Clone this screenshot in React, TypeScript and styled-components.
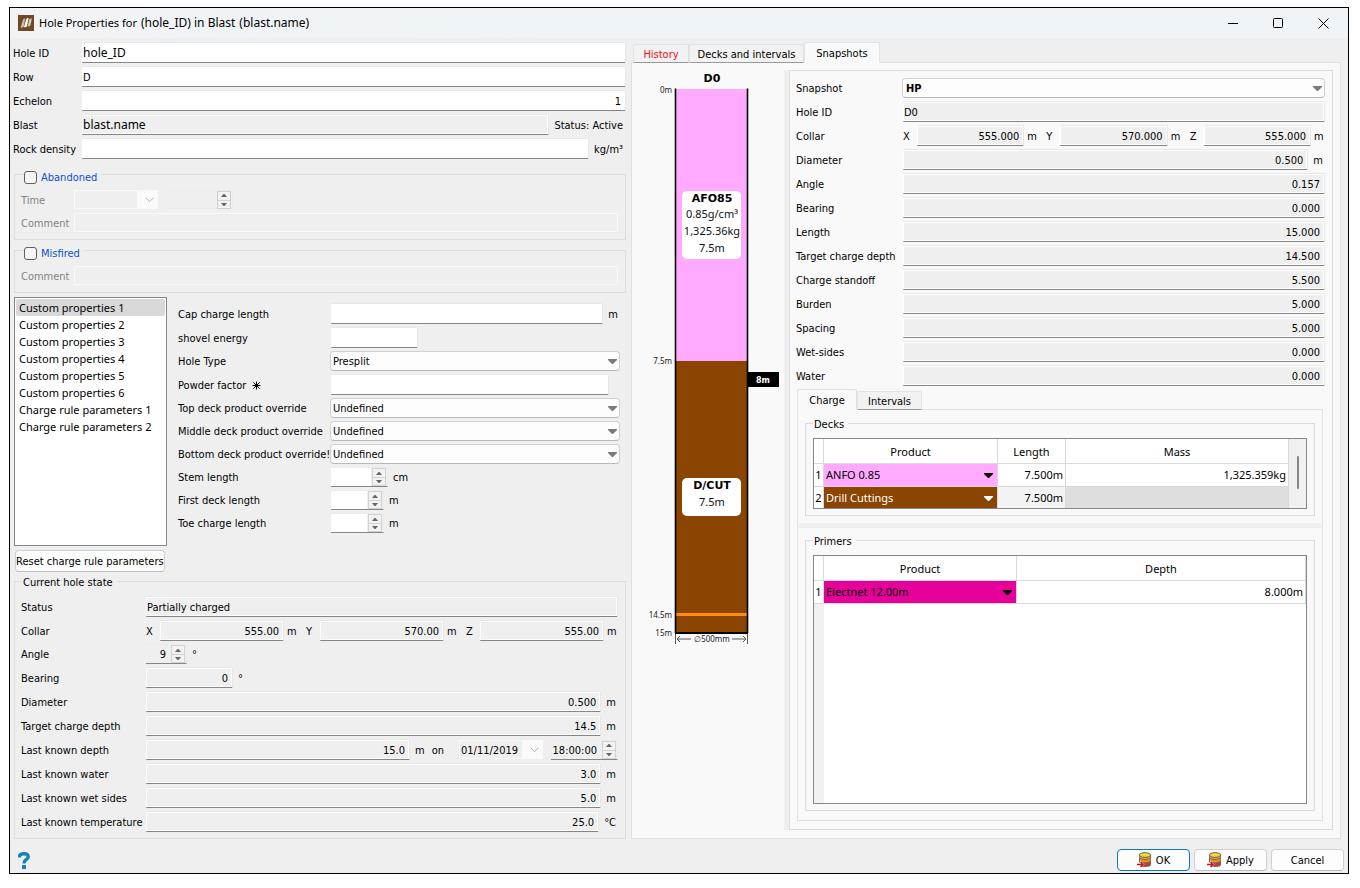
import React, { useId } from "react";
import styled, { createGlobalStyle, css } from "styled-components";

const uiFont = `"DejaVu Sans Condensed", Tahoma, sans-serif`;
const viewFont = `"Noto Sans", "Segoe UI", sans-serif`;

const GlobalStyle = createGlobalStyle`
  *, *::before, *::after { box-sizing: border-box; }
  body { margin: 0; background: #fff; color: #000; font: 11px/15px ${uiFont}; }
  button, input, select { font: inherit; color: inherit; margin: 0; padding: 0; }
  svg { display: block; }
`;

/* ---------- window frame ---------- */

const Dialog = styled.main`
  display: flex;
  flex-direction: column;
  min-width: 1220px;
  margin: 7px 11px 14px 9px;
  border: 1px solid #000;
  background: #efefef;
`;

const TitleBar = styled.header`
  display: flex;
  align-items: center;
  height: 30px;
  padding: 0 2px 0 8px;
  background: linear-gradient(90deg, #f2f3f5, #eef4f8 40%);
`;

const Title = styled.h1`
  flex: 1;
  display: flex;
  align-items: center;
  gap: 4px;
  margin: 0 0 0 5px;
  font: 400 11px/16px ${viewFont};
`;

const TitlePart = styled.span`
  font-size: 12px;
`;

const WindowButton = styled.button`
  display: grid;
  place-items: center;
  width: 45px;
  height: 30px;
  border: 0;
  background: none;
`;

const Body = styled.div`
  display: grid;
  grid-template-columns: minmax(560px, 621fr) minmax(640px, 717fr);
`;

const LeftColumn = styled.div`
  display: flex;
  flex-direction: column;
  padding: 4px 5px 0 3px;
`;

/* ---------- form parts ---------- */

const Rows = styled.div`
  display: flex;
  flex-direction: column;
  gap: 3px;
`;

const Row = styled.div<{ $label: number }>`
  display: grid;
  grid-template-columns: ${(p) => p.$label}px minmax(0, 1fr);
  align-items: center;
`;

const RowLabel = styled.label<{ $muted?: boolean }>`
  display: flex;
  align-items: center;
  gap: 6px;
  padding-top: 1px;
  white-space: nowrap;
  color: ${(p) => (p.$muted ? "#838383" : "inherit")};
`;

const Cell = styled.div<{ $gap?: number; $end?: number }>`
  display: flex;
  align-items: center;
  gap: ${(p) => p.$gap ?? 5}px;
  padding-right: ${(p) => p.$end ?? 0}px;
`;

const TextField = styled.input<{ $width?: number; $right?: boolean; $view?: boolean }>`
  ${(p) => (p.$width ? `flex: none; width: ${p.$width}px;` : "flex: 1; width: 0;")}
  min-width: 0;
  height: 21px;
  padding: 2px 4px 0 1px;
  border: 1px solid #e8e8e8;
  border-left-width: 0;
  border-bottom-color: #868686;
  border-radius: 1px;
  background: #fff;
  text-align: ${(p) => (p.$right ? "right" : "left")};
  outline: none;
  ${(p) => p.$view && `padding-top: 0; font: 12px/16px ${viewFont};`}
  &:read-only {
    background: #efefef;
    box-shadow: inset 1px 1px #fefefe, inset -1px -1px #fefefe;
  }
  &:disabled {
    height: 19px;
    border: 1px solid #f9f9f9;
    box-shadow: none;
  }
`;

const Unit = styled.span`
  padding-top: 1px;
  white-space: nowrap;
`;

const Axis = styled.label`
  flex: none;
  width: 14px;
  padding-top: 1px;
`;

const AxisUnit = styled.span<{ $last: boolean }>`
  flex: none;
  width: ${(p) => (p.$last ? 14 : 22)}px;
  padding: 1px 0 0 3px;
`;

const DepthUnits = styled.span`
  flex: none;
  display: flex;
  gap: 7px;
  width: 49px;
  padding-left: 5px;
`;

const SelectShell = styled.span`
  flex: 1;
  min-width: 0;
  display: grid;
  align-items: center;
  margin-left: -1px;
  > * { grid-area: 1 / 1; }
  > svg { justify-self: end; margin-right: 3px; pointer-events: none; }
`;

const Select = styled.select<{ $strong?: boolean }>`
  appearance: none;
  width: 100%;
  height: 20px;
  padding: 1px 16px 0 2px;
  border: 1px solid #d0d0d0;
  border-bottom-color: #b8b8b8;
  border-radius: 4px;
  background: #fdfdfd;
  outline: none;
  ${(p) => p.$strong && `font-weight: 700; padding-left: 3px;`}
`;

const SpinShell = styled.span<{ $width: number; $tone: "edit" | "read" | "off" }>`
  flex: none;
  display: flex;
  align-items: center;
  width: ${(p) => p.$width}px;
  height: ${(p) => (p.$tone === "off" ? 19 : 20)}px;
  padding-right: 1px;
  border: 1px solid #ebebeb;
  border-left-width: 0;
  border-bottom-color: ${(p) => (p.$tone === "off" ? "#ebebeb" : "#868686")};
  background: ${(p) => (p.$tone === "edit" ? "linear-gradient(90deg, #fff calc(100% - 16px), #efefef 0)" : "#efefef")};
`;

const SpinInput = styled.input`
  flex: 1;
  width: 0;
  min-width: 0;
  border: 0;
  padding: 1px 5px 0 1px;
  background: none;
  text-align: right;
  outline: none;
`;

const SpinButtons = styled.span`
  flex: none;
  display: grid;
  grid-template-rows: 8px 8px;
  width: 14px;
  border: 1px solid #d2d2d2;
`;

const SpinButton = styled.button`
  display: grid;
  place-items: center;
  border: 0;
  background: #f2f2f2;
  & + & { border-top: 1px solid #d2d2d2; }
`;

const DateShell = styled.span`
  flex: none;
  display: flex;
  align-items: stretch;
  width: 84px;
  height: 19px;
  border: 1px solid #f9f9f9;
`;

const DateInput = styled(SpinInput)`
  padding: 1px 0 0 1px;
  text-align: left;
`;

const DateButton = styled.button`
  display: grid;
  place-items: center;
  width: 20px;
  padding-left: 4px;
  border: 0;
  background: #fafafa;
`;

const Group = styled.fieldset<{ $top: number; $gap?: number; $bottom: number }>`
  min-width: 0;
  margin: ${(p) => p.$gap ?? 0}px 0 0 1px;
  padding: ${(p) => p.$top}px 7px ${(p) => p.$bottom}px 6px;
  border: 1px solid #dcdcdc;
`;

const Legend = styled.legend<{ $check?: boolean }>`
  height: 15px;
  padding: 1px 4px 0 2px;
  ${(p) =>
    p.$check &&
    css`
      height: 19px;
      margin-left: 3px;
      padding: 4px 4px 0 0;
      color: #0a50d0;
      label { display: flex; align-items: center; gap: 4px; }
      span { padding-top: 1px; }
    `}
`;

const Check = styled.input`
  appearance: none;
  width: 13px;
  height: 13px;
  border: 1px solid #5f5f5f;
  border-radius: 3px;
  background: #f5f5f5;
`;

const GroupRows = styled.div`
  display: flex;
  flex-direction: column;
  gap: 4px;
`;

/* ---------- custom properties ---------- */

const Properties = styled.section`
  display: grid;
  grid-template-columns: 153px minmax(0, 1fr);
  gap: 11px;
  margin: 4px 6px 0 1px;
`;

const PropertyRows = styled(Rows)`
  padding-top: 6px;
`;

const PropertyList = styled.ul`
  height: 249px;
  margin: 0;
  padding: 1px;
  list-style: none;
  border: 1px solid #828790;
  background: #fff;
  font: 11px/17px ${viewFont};
`;

const PropertyItem = styled.li<{ $active: boolean }>`
  padding-left: 3px;
  border-radius: 2px;
  background: ${(p) => (p.$active ? "#d9d9d9" : "transparent")};
`;

const Button = styled.button<{ $primary?: boolean; $width?: number }>`
  display: flex;
  align-items: center;
  justify-content: center;
  gap: 4px;
  ${(p) => p.$width && `width: ${p.$width}px;`}
  height: 22px;
  border: 1px solid ${(p) => (p.$primary ? "#0a78c8" : "#d0d0d0")};
  ${(p) => !p.$primary && "border-bottom-color: #bcbcbc;"}
  border-radius: 4px;
  background: #fdfdfd;
  white-space: nowrap;
`;

const ResetButton = styled(Button)`
  align-self: flex-start;
  margin: 4px 0 2px 2px;
`;

/* ---------- snapshots ---------- */

const RightColumn = styled.div`
  display: flex;
  flex-direction: column;
  min-width: 0;
  padding: 4px 7px 0 0;
`;

const Tabs = styled.div<{ $inner?: boolean }>`
  display: flex;
  align-items: flex-end;
  height: 20px;
  padding-left: ${(p) => (p.$inner ? 0 : 2)}px;
  ${(p) => p.$inner && "margin-top: 3px;"}
`;

const Tab = styled.button<{ $active?: boolean; $alert?: boolean; $width: number }>`
  position: relative;
  width: ${(p) => p.$width}px;
  height: ${(p) => (p.$active ? 21 : 19)}px;
  margin-bottom: -1px;
  padding-top: ${(p) => (p.$active ? 1 : 2)}px;
  border: 1px solid #e2e2e2;
  border-bottom-color: ${(p) => (p.$active ? "#f9f9f9" : "#9a9a9a")};
  border-radius: 2px 2px 0 0;
  background: ${(p) => (p.$active ? "#f9f9f9" : "#f2f2f2")};
  color: ${(p) => (p.$alert ? "#f01020" : "inherit")};
  white-space: nowrap;
`;

const TabPanel = styled.div`
  flex: 1;
  display: grid;
  grid-template-columns: 152px 5px minmax(0, 1fr);
  padding: 7px 7px 8px 0;
  border: 1px solid #e0e0e0;
  background: #f9f9f9;
`;

const Splitter = styled.div<{ $across?: boolean }>`
  background: #efefef;
  ${(p) => p.$across && "height: 5px; margin: 7px 1px 5px;"}
`;

const Frame = styled.div`
  display: flex;
  flex-direction: column;
  padding: 7px 7px 8px 6px;
  border: 1px solid #dcdcdc;
`;

const InnerTabs = styled.div`
  flex: 1;
  display: flex;
  flex-direction: column;
  margin: 0 2px 0 1px;
`;

const InnerPanel = styled.div`
  flex: 1;
  display: flex;
  flex-direction: column;
  padding: 6px 0 9px;
  border: 1px solid #e0e0e0;
`;

const TableGroup = styled(Group)`
  margin: 0 7px;
  padding: 7px 7px 6px;
  > legend { padding-left: 1px; }
`;

const TableView = styled.div<{ $height: number }>`
  display: flex;
  height: ${(p) => p.$height}px;
  border: 1px solid #828790;
  background: #fff;
  overflow: hidden;
`;

const Table = styled.table`
  flex: 1;
  align-self: flex-start;
  table-layout: fixed;
  border-spacing: 0;
  font: 11px/16px ${viewFont};
`;

const HeadCell = styled.th<{ $width?: number }>`
  ${(p) => p.$width && `width: ${p.$width}px;`}
  height: 25px;
  padding: 2px 0 0;
  border: solid #d9d9d9;
  border-width: 0 1px 1px 0;
  font-weight: 400;
`;

const NumberCell = styled.th`
  height: 23px;
  padding: 0;
  border: solid #d9d9d9;
  border-width: 0 1px 1px 0;
  font-weight: 400;
`;

const DataCell = styled.td<{ $fill?: string }>`
  height: 23px;
  padding: 0 2px 0 0;
  border: solid #d9d9d9;
  border-width: 0 1px 1px 0;
  background: ${(p) => p.$fill ?? "#fff"};
  text-align: right;
`;

const ProductCell = styled.td<{ $fill: string; $ink: string }>`
  height: 23px;
  padding: 0;
  border: solid #d9d9d9;
  border-width: 0 1px 1px 0;
  color: ${(p) => p.$ink};
  background: ${(p) => p.$fill};
`;

const ProductShell = styled.span`
  display: grid;
  align-items: center;
  > * { grid-area: 1 / 1; }
  > svg { justify-self: end; margin-right: 4px; pointer-events: none; }
`;

const ProductSelect = styled.select`
  appearance: none;
  width: 100%;
  height: 22px;
  padding: 0 18px 0 2px;
  border: 0;
  background: none;
  outline: none;
`;

const Gutter = styled.div`
  flex: none;
  width: 10px;
  background: #f0f0f0;
`;

const EmptyRows = styled.div`
  flex: 1;
  display: flex;
`;

const PrimerView = styled(TableView)`
  flex-direction: column;
  ${Table} { flex: none; align-self: stretch; width: 100%; }
`;

const ScrollTrack = styled.div`
  flex: none;
  width: 17px;
  padding: 17px 0 0 8px;
  background: #f0f0f0;
`;

const ScrollThumb = styled.div`
  width: 2px;
  height: 33px;
  border-radius: 1px;
  background: #868686;
`;

const Footer = styled.footer`
  display: flex;
  align-items: flex-start;
  gap: 4px;
  height: 34px;
  padding: 10px 4px 0 8px;
`;

const HelpLink = styled.a`
  margin-right: auto;
  padding-top: 3px;
`;

/* ---------- drawings ---------- */

const Logo = () => (
  <svg width="16" height="16" viewBox="0 0 16 16" aria-hidden="true">
    <rect width="16" height="16" fill="#714a24" />
    <path d="M2.600 12.500L5 4.800Q5.800 3 7.200 3.500L5.700 11.500Q5 13 2.600 12.500Z" fill="#cdbfb0" />
    <path d="M6 12L8.200 4.200Q9 2.600 10.600 3.200L9 11Q8.400 12.800 6 12Z" fill="#fff" />
    <path d="M9.800 11.500L11.200 4.500Q12 3 13.800 3.500L12.500 10Q11.600 12 9.800 11.500Z" fill="#d8ccc0" />
  </svg>
);

const DropArrow = () => (
  <svg width="9" height="5" viewBox="0 0 9 5" aria-hidden="true">
    <path d="M0 0H9V1L5 5H4L0 1Z" fill="#7b7b7b" />
  </svg>
);

const CellArrow = () => (
  <svg width="9" height="5" viewBox="0 0 9 5" aria-hidden="true">
    <path d="M0 0H9V1L5 5H4L0 1Z" fill="currentColor" />
  </svg>
);

const Chevron = () => (
  <svg width="9" height="6" viewBox="0 0 9 6" fill="none" stroke="#b4b4b4" aria-hidden="true">
    <path d="M0.500 0.700L4.500 4.700L8.500 0.700" />
  </svg>
);

const SpinArrow = ({ down }: { down?: boolean }) => (
  <svg width="6" height="3" viewBox="0 0 6 3" aria-hidden="true">
    <path d={down ? "M0 0H6L3.500 3H2.500Z" : "M0 3H6L3.500 0H2.500Z"} fill="#666" />
  </svg>
);

const Burst = () => (
  <svg width="9" height="9" viewBox="0 0 9 9" stroke="#000" aria-hidden="true">
    <path d="M4.500 0.500V8.500M0.500 4.500H8.500M1.300 1.300L7.700 7.700M7.700 1.300L1.300 7.700" />
    <circle cx="4.500" cy="4.500" r="1.400" />
  </svg>
);

const SaveIcon = () => (
  <svg width="15" height="16" viewBox="0 0 15 16" aria-hidden="true">
    <path d="M2 3V12.500Q2 15 8 15Q14 15 14 12.500V3Z" fill="#6a6a66" />
    <path d="M3 9V12.500Q4 14 8 14Q13 14 13 12.500V9Z" fill="#c8382c" />
    <path d="M3 6.500Q8 9 13.500 6V8.500Q12 11 8 11Q4 11 3 9.500Z" fill="#f08a1c" />
    <path d="M2.500 4Q8 7.500 13.500 4V6Q12 7.800 8 7.800Q4 7.800 2.500 6Z" fill="#f4b820" />
    <path d="M2 5.600Q8 9.400 14 5.600M2 9.200Q8 13 14 9.200" fill="none" stroke="#6a6a66" />
    <ellipse cx="8" cy="3" rx="5.600" ry="2.400" fill="#fcd23a" stroke="#6a6a66" />
    <path d="M0 10.500H3V8.500L7.500 12.500L3 16H0Z" fill="#fdfdfd" />
    <path d="M0 12.500H6M3.500 10L6 12.500L3.500 15" fill="none" stroke="#c01824" strokeWidth="1.500" />
  </svg>
);

const HelpIcon = () => (
  <svg width="12" height="17" viewBox="0 0 12 17" aria-hidden="true">
    <path d="M1.500 5.500V4Q2 1.700 6 1.700Q10.200 1.700 10.200 4.800Q10.200 6.600 8 7.800Q6 9 6 11.500" fill="none" stroke="#1683b8" strokeWidth="3.400" />
    <rect x="4" y="13" width="4" height="4" fill="#1683b8" />
  </svg>
);

const Chart = styled.svg`
  text { font-family: ${viewFont}; font-size: 11px; text-anchor: middle; fill: #111; }
  .name { font-family: "DejaVu Sans", Verdana, sans-serif; font-weight: 700; fill: #000; }
  .tick { font-size: 8px; text-anchor: end; fill: #222; }
  .size { font-size: 8px; fill: #222; }
  .flag { font-family: "DejaVu Sans", Verdana, sans-serif; font-size: 8px; font-weight: 700; fill: #fff; }
`;

const HoleChart = () => (
  <Chart width="152" height="580" viewBox="0 0 152 580" role="img" aria-label="Charge profile of hole D0">
    <text className="name" x="80" y="12">D0</text>
    <rect x="43" y="19" width="73" height="272" fill="#ffaaff" />
    <rect x="43" y="291" width="73" height="272" fill="#8b4500" />
    <rect x="43" y="543" width="73" height="3" fill="#ff8c10" />
    <path d="M43.500 18.500V563M115.500 18.500V563" stroke="#000" strokeWidth="1.600" />
    <rect x="43" y="562" width="73" height="2" fill="#000" />
    <rect x="50" y="121" width="59" height="68" rx="5" fill="#fff" />
    <text className="name" x="80" y="132">AFO85</text>
    <text x="80" y="148">0.85g/cm³</text>
    <text x="80" y="165">1,325.36kg</text>
    <text x="80" y="182">7.5m</text>
    <rect x="50" y="408" width="59" height="38" rx="5" fill="#fff" />
    <text className="name" x="80" y="419">D/CUT</text>
    <text x="80" y="436">7.5m</text>
    <rect x="116" y="302" width="31" height="15" fill="#000" />
    <text className="flag" x="131" y="313">8m</text>
    <text className="tick" x="40" y="23">0m</text>
    <text className="tick" x="40" y="294">7.5m</text>
    <text className="tick" x="40" y="548">14.5m</text>
    <text className="tick" x="40" y="566">15m</text>
    <path d="M43.500 564V574M115.500 564V574" stroke="#555" />
    <path d="M45 569H59M48 566L45 569L48 572M100 569H114M111 566L114 569L111 572" fill="none" stroke="#555" />
    <text className="size" x="80" y="572">∅500mm</text>
  </Chart>
);

/* ---------- composed controls ---------- */

type Tone = "edit" | "read" | "off";

const Spin = ({ id, width, value, tone = "edit", label }: { id?: string; width: number; value?: string; tone?: Tone; label?: string }) => (
  <SpinShell $width={width} $tone={tone}>
    <SpinInput id={id} aria-label={label} defaultValue={value} readOnly={tone === "read"} disabled={tone === "off"} />
    <SpinButtons>
      <SpinButton type="button" aria-label="Increase" disabled={tone !== "edit"}><SpinArrow /></SpinButton>
      <SpinButton type="button" aria-label="Decrease" disabled={tone !== "edit"}><SpinArrow down /></SpinButton>
    </SpinButtons>
  </SpinShell>
);

const DatePicker = ({ id, value, label }: { id?: string; value?: string; label?: string }) => (
  <DateShell>
    <DateInput id={id} aria-label={label} defaultValue={value} disabled={!value} readOnly={!!value} />
    <DateButton type="button" aria-label="Open calendar" disabled><Chevron /></DateButton>
  </DateShell>
);

const DropDown = ({ id, value, strong }: { id: string; value: string; strong?: boolean }) => (
  <SelectShell>
    <Select id={id} $strong={strong} defaultValue={value}>
      <option>{value}</option>
    </Select>
    <DropArrow />
  </SelectShell>
);

const Product = ({ name, fill, ink }: { name: string; fill: string; ink: string }) => (
  <ProductCell $fill={fill} $ink={ink}>
    <ProductShell>
      <ProductSelect aria-label="Product" defaultValue={name}>
        <option>{name}</option>
      </ProductSelect>
      <CellArrow />
    </ProductShell>
  </ProductCell>
);

interface FieldProps {
  label: string;
  labelWidth: number;
  value?: string;
  unit?: string;
  width?: number;
  right?: boolean;
  view?: boolean;
  readOnly?: boolean;
  disabled?: boolean;
  mark?: boolean;
  end?: number;
}

const Field = ({ label, labelWidth, value, unit, width, right, view, readOnly, disabled, mark, end }: FieldProps) => {
  const id = useId();
  return (
    <Row $label={labelWidth}>
      <RowLabel htmlFor={id} $muted={disabled}>{label}{mark && <Burst />}</RowLabel>
      <Cell $end={end}>
        <TextField id={id} defaultValue={value} $width={width} $right={right} $view={view} readOnly={readOnly} disabled={disabled} />
        {unit && <Unit>{unit}</Unit>}
      </Cell>
    </Row>
  );
};

const SelectField = ({ label, labelWidth, value, strong }: { label: string; labelWidth: number; value: string; strong?: boolean }) => {
  const id = useId();
  return (
    <Row $label={labelWidth}>
      <RowLabel htmlFor={id}>{label}</RowLabel>
      <Cell><DropDown id={id} value={value} strong={strong} /></Cell>
    </Row>
  );
};

const SpinField = ({ label, labelWidth, width, value, unit, tone }: { label: string; labelWidth: number; width: number; value?: string; unit: string; tone?: Tone }) => {
  const id = useId();
  return (
    <Row $label={labelWidth}>
      <RowLabel htmlFor={id}>{label}</RowLabel>
      <Cell><Spin id={id} width={width} value={value} tone={tone} /><Unit>{unit}</Unit></Cell>
    </Row>
  );
};

const CollarField = ({ labelWidth, values }: { labelWidth: number; values: string[] }) => {
  const id = useId();
  return (
    <Row $label={labelWidth}>
      <RowLabel as="span">Collar</RowLabel>
      <Cell $gap={0}>
        {["X", "Y", "Z"].map((axis, i) => (
          <React.Fragment key={axis}>
            <Axis htmlFor={id + axis}>{axis}</Axis>
            <TextField id={id + axis} defaultValue={values[i]} $right readOnly />
            <AxisUnit $last={i === 2}>m</AxisUnit>
          </React.Fragment>
        ))}
      </Cell>
    </Row>
  );
};

const properties = [
  "Custom properties 1", "Custom properties 2", "Custom properties 3", "Custom properties 4",
  "Custom properties 5", "Custom properties 6", "Charge rule parameters 1", "Charge rule parameters 2",
];

const snapshotValues: [string, string][] = [
  ["Angle", "0.157"], ["Bearing", "0.000"], ["Length", "15.000"], ["Target charge depth", "14.500"],
  ["Charge standoff", "5.500"], ["Burden", "5.000"], ["Spacing", "5.000"], ["Wet-sides", "0.000"], ["Water", "0.000"],
];

const HoleForm = () => (
  <Rows>
    <Field label="Hole ID" labelWidth={69} value="hole_ID" view />
    <Field label="Row" labelWidth={69} value="D" />
    <Field label="Echelon" labelWidth={69} value="1" right />
    <Field label="Blast" labelWidth={69} value="blast.name" unit="Status: Active" view readOnly end={3} />
    <Field label="Rock density" labelWidth={69} unit="kg/m³" end={3} />
  </Rows>
);

const FlagGroups = () => (
  <>
    <Group $top={6} $gap={6} $bottom={7}>
      <Legend $check><label><Check type="checkbox" /><span>Abandoned</span></label></Legend>
      <GroupRows>
        <Row $label={53}>
          <RowLabel htmlFor="abandoned-date" $muted>Time</RowLabel>
          <Cell $gap={7}>
            <DatePicker id="abandoned-date" />
            <Spin width={68} tone="off" label="Abandoned time" />
          </Cell>
        </Row>
        <Field label="Comment" labelWidth={53} disabled />
      </GroupRows>
    </Group>
    <Group $top={6} $gap={1} $bottom={7}>
      <Legend $check><label><Check type="checkbox" /><span>Misfired</span></label></Legend>
      <Field label="Comment" labelWidth={53} disabled />
    </Group>
  </>
);

const PropertySection = () => (
  <>
    <Properties>
      <PropertyList>
        {properties.map((name, i) => <PropertyItem key={name} $active={i === 0}>{name}</PropertyItem>)}
      </PropertyList>
      <PropertyRows>
        <Field label="Cap charge length" labelWidth={153} unit="m" end={2} />
        <Field label="shovel energy" labelWidth={153} width={87} />
        <SelectField label="Hole Type" labelWidth={153} value="Presplit" />
        <Field label="Powder factor" labelWidth={153} mark end={11} />
        <SelectField label="Top deck product override" labelWidth={153} value="Undefined" />
        <SelectField label="Middle deck product override" labelWidth={153} value="Undefined" />
        <SelectField label="Bottom deck product override!" labelWidth={153} value="Undefined" />
        <SpinField label="Stem length" labelWidth={153} width={57} unit="cm" />
        <SpinField label="First deck length" labelWidth={153} width={53} unit="m" />
        <SpinField label="Toe charge length" labelWidth={153} width={53} unit="m" />
      </PropertyRows>
    </Properties>
    <ResetButton type="button">Reset charge rule parameters</ResetButton>
  </>
);

const HoleState = () => (
  <Group $top={7} $bottom={6}>
    <Legend>Current hole state</Legend>
    <Rows>
      <Field label="Status" labelWidth={125} value="Partially charged" readOnly />
      <CollarField labelWidth={125} values={["555.00", "570.00", "555.00"]} />
      <SpinField label="Angle" labelWidth={125} width={41} value="9" unit="°" tone="read" />
      <Field label="Bearing" labelWidth={125} width={87} value="0" unit="°" right readOnly />
      <Field label="Diameter" labelWidth={125} value="0.500" unit="m" right readOnly end={2} />
      <Field label="Target charge depth" labelWidth={125} value="14.5" unit="m" right readOnly end={2} />
      <Row $label={125}>
        <RowLabel htmlFor="last-depth">Last known depth</RowLabel>
        <Cell $gap={0}>
          <TextField id="last-depth" defaultValue="15.0" $right readOnly />
          <DepthUnits>
            <Unit>m</Unit>
            <Unit>on</Unit>
          </DepthUnits>
          <Cell $gap={8}>
            <DatePicker value="01/11/2019" label="Depth date" />
            <Spin width={67} value="18:00:00" tone="read" label="Depth time" />
          </Cell>
        </Cell>
      </Row>
      <Field label="Last known water" labelWidth={125} value="3.0" unit="m" right readOnly end={2} />
      <Field label="Last known wet sides" labelWidth={125} value="5.0" unit="m" right readOnly end={2} />
      <Field label="Last known temperature" labelWidth={125} value="25.0" unit="°C" right readOnly end={2} />
    </Rows>
  </Group>
);

const DeckTable = () => (
  <TableView $height={71}>
    <Table>
      <thead>
        <tr>
          <HeadCell $width={10} aria-label="Number" />
          <HeadCell $width={174}>Product</HeadCell>
          <HeadCell $width={68}>Length</HeadCell>
          <HeadCell>Mass</HeadCell>
        </tr>
      </thead>
      <tbody>
        <tr>
          <NumberCell scope="row">1</NumberCell>
          <Product name="ANFO 0.85" fill="#ffaaff" ink="#000" />
          <DataCell>7.500m</DataCell>
          <DataCell>1,325.359kg</DataCell>
        </tr>
        <tr>
          <NumberCell scope="row">2</NumberCell>
          <Product name="Drill Cuttings" fill="#8b4500" ink="#fff" />
          <DataCell $fill="#f3f3f3">7.500m</DataCell>
          <DataCell $fill="#dedede" />
        </tr>
      </tbody>
    </Table>
    <ScrollTrack><ScrollThumb /></ScrollTrack>
  </TableView>
);

const PrimerTable = () => (
  <PrimerView $height={249}>
    <Table>
      <thead>
        <tr>
          <HeadCell $width={10} aria-label="Number" />
          <HeadCell $width={193}>Product</HeadCell>
          <HeadCell>Depth</HeadCell>
        </tr>
      </thead>
      <tbody>
        <tr>
          <NumberCell scope="row">1</NumberCell>
          <Product name="Electnet 12.00m" fill="#e6009a" ink="#000" />
          <DataCell>8.000m</DataCell>
        </tr>
      </tbody>
    </Table>
    <EmptyRows><Gutter /></EmptyRows>
  </PrimerView>
);

const Snapshots = () => (
  <RightColumn>
    <Tabs role="tablist">
      <Tab type="button" role="tab" $alert $width={56}>History</Tab>
      <Tab type="button" role="tab" $width={115}>Decks and intervals</Tab>
      <Tab type="button" role="tab" aria-selected $active $width={76}>Snapshots</Tab>
    </Tabs>
    <TabPanel role="tabpanel">
      <HoleChart />
      <Splitter />
      <Frame>
        <Rows>
          <SelectField label="Snapshot" labelWidth={107} value="HP" strong />
          <Field label="Hole ID" labelWidth={107} value="D0" readOnly />
          <CollarField labelWidth={107} values={["555.000", "570.000", "555.000"]} />
          <Field label="Diameter" labelWidth={107} value="0.500" unit="m" right readOnly end={2} />
          {snapshotValues.map(([label, value]) => (
            <Field key={label} label={label} labelWidth={107} value={value} right readOnly />
          ))}
        </Rows>
        <InnerTabs>
          <Tabs role="tablist" $inner>
            <Tab type="button" role="tab" aria-selected $active $width={60}>Charge</Tab>
            <Tab type="button" role="tab" $width={65}>Intervals</Tab>
          </Tabs>
          <InnerPanel role="tabpanel">
            <TableGroup $top={7} $bottom={6}>
              <Legend>Decks</Legend>
              <DeckTable />
            </TableGroup>
            <Splitter $across />
            <TableGroup $top={7} $bottom={6}>
              <Legend>Primers</Legend>
              <PrimerTable />
            </TableGroup>
          </InnerPanel>
        </InnerTabs>
      </Frame>
    </TabPanel>
  </RightColumn>
);

export default function App() {
  return (
    <>
      <GlobalStyle />
      <Dialog>
        <TitleBar>
          <Logo />
          <Title>
            <span>Hole Properties for</span>
            <TitlePart>(hole_ID) in Blast</TitlePart>
            <TitlePart>(blast.name)</TitlePart>
          </Title>
          <WindowButton type="button" aria-label="Minimize">
            <svg width="11" height="11" stroke="#000"><path d="M0 5.500H10" /></svg>
          </WindowButton>
          <WindowButton type="button" aria-label="Maximize">
            <svg width="11" height="11" stroke="#000" fill="none"><rect x="0.500" y="0.500" width="9" height="9" rx="1" /></svg>
          </WindowButton>
          <WindowButton type="button" aria-label="Close">
            <svg width="11" height="11" stroke="#000"><path d="M0.500 0.500L10.500 10.500M10.500 0.500L0.500 10.500" /></svg>
          </WindowButton>
        </TitleBar>
        <Body>
          <LeftColumn>
            <HoleForm />
            <FlagGroups />
            <PropertySection />
            <HoleState />
          </LeftColumn>
          <Snapshots />
        </Body>
        <Footer>
          <HelpLink href="#help" aria-label="Help"><HelpIcon /></HelpLink>
          <Button type="button" $primary $width={73}><SaveIcon />OK</Button>
          <Button type="button" $width={73}><SaveIcon />Apply</Button>
          <Button type="button" $width={73}>Cancel</Button>
        </Footer>
      </Dialog>
    </>
  );
}
